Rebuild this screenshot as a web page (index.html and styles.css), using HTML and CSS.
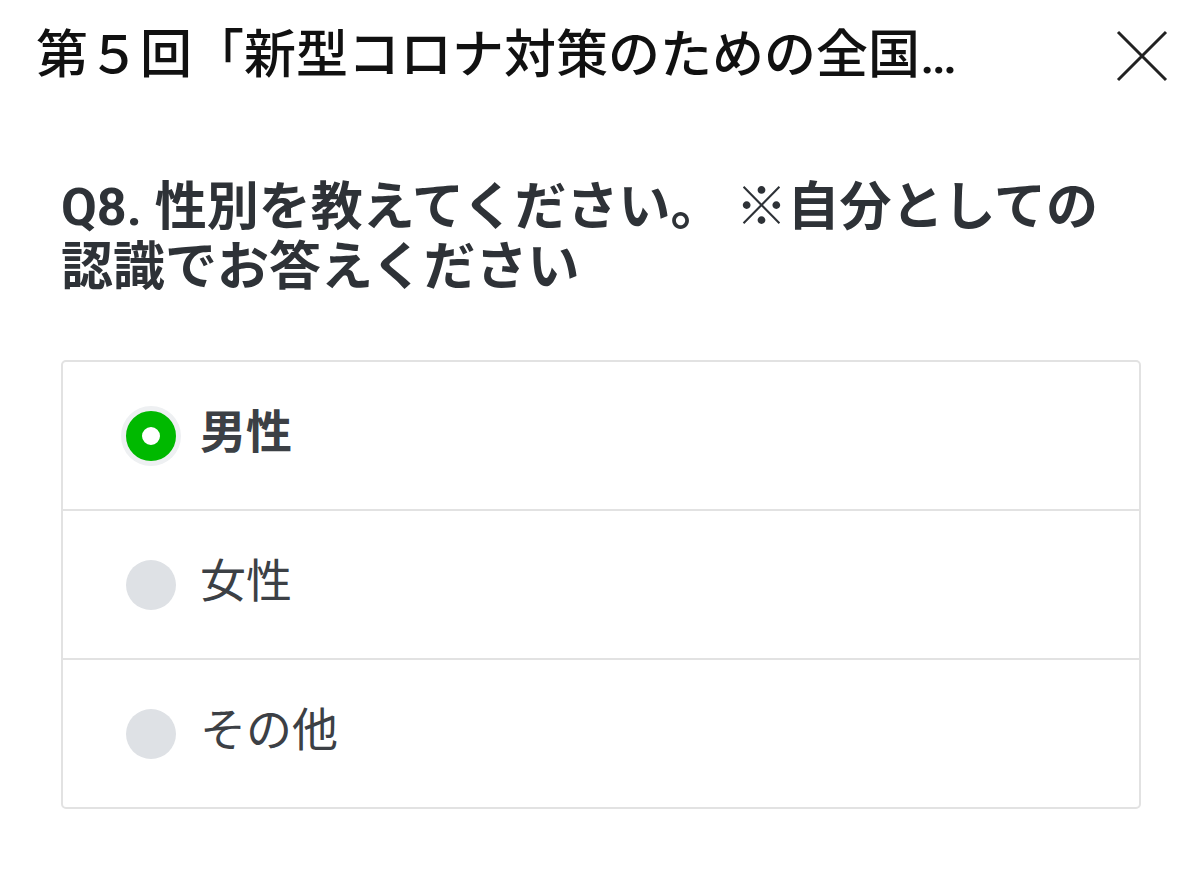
FILE: index.html
```html
<!DOCTYPE html>
<html lang="ja">
<head>
<meta charset="UTF-8">
<title>アンケート</title>
<link rel="stylesheet" href="styles.css">
</head>
<body>
<div class="header">
    <h1 class="title">第５回「新型コロナ対策のための全国調査」</h1>
    <a class="close" href="javascript:;">
        <svg width="52" height="52" viewBox="0 0 52 52"><path d="M2 2L50 50M50 2L2 50" stroke="#222" stroke-width="3" fill="none"/></svg>
    </a>
</div>
<div class="main">
    <h2 class="question">Q8. 性別を教えてください。 ※自分としての認識でお答えください</h2>
    <ul class="choices">
        <li class="choice on"><span class="radio"></span><span class="label">男性</span></li>
        <li class="choice"><span class="radio"></span><span class="label">女性</span></li>
        <li class="choice"><span class="radio"></span><span class="label">その他</span></li>
    </ul>
</div>
</body>
</html>
```

FILE: styles.css
```css
html,body{margin:0;padding:0;background:#fff;}
body{font-family:Roboto,"Noto Sans CJK JP",sans-serif;color:#111;}
h1,h2,ul,li{margin:0;padding:0;}
ul{list-style:none;}

.header{display:flex;align-items:center;height:112px;padding:0 32px 0 36px;}
.title{flex:1;min-width:0;font-size:52px;font-weight:500;line-height:62px;white-space:nowrap;overflow:hidden;text-overflow:ellipsis;color:#111;padding-right:140px;}
.close{display:block;width:52px;height:52px;}
.close svg{display:block;}

.main{padding:66px 59px 0 61px;}
.question{font-size:52px;font-weight:700;line-height:60px;color:#2e3237;}
.choices{margin-top:62px;border:2px solid #e2e2e2;border-radius:5px;}
.choice{display:flex;align-items:center;height:147px;padding-left:63px;}
.choice + .choice{border-top:2px solid #e2e2e2;}
.radio{width:50px;height:50px;border-radius:50%;background:#dee1e5;box-sizing:border-box;flex:none;}
.choice.on .radio{border:16px solid #00b900;background:#fff;box-shadow:0 0 0 5px #eef0f2;}
.label{margin:0 0 8px 24px;font-size:46px;line-height:60px;color:#3c4045;}
.choice.on .label{font-weight:700;}
```
